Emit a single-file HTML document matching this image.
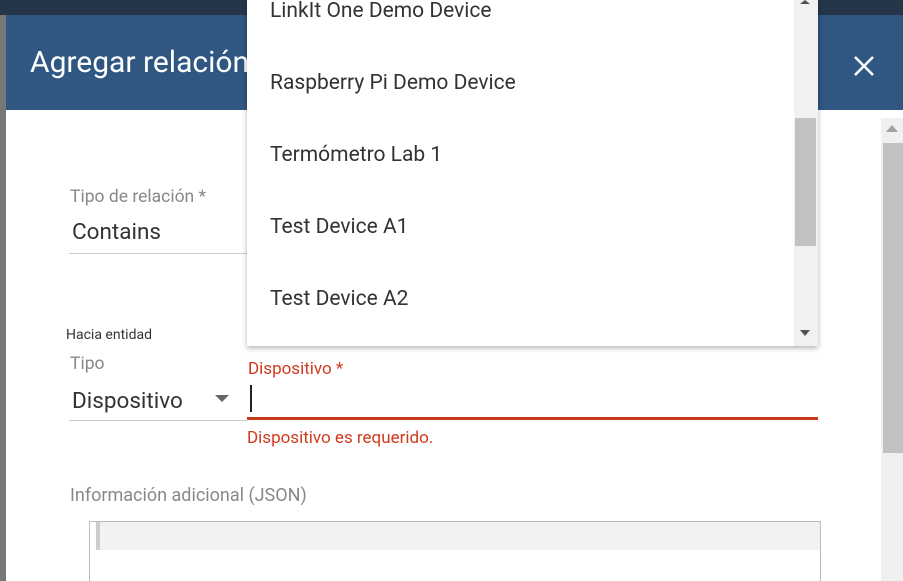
<!DOCTYPE html>
<html><head><meta charset="utf-8"><style>
*{margin:0;padding:0;box-sizing:border-box}
html,body{width:903px;height:581px;overflow:hidden}
body{position:relative;background:#777;font-family:"Roboto","Liberation Sans",sans-serif}
.top{position:absolute;left:0;top:0;width:903px;height:15px;background:#25364a}
.dlg{position:absolute;left:6px;top:15px;width:897px;height:566px;background:#fff;overflow:hidden}
.hdr{position:absolute;left:0;top:0;width:897px;height:95px;background:#2f5782}
.ttl{position:absolute;left:24px;top:30px;color:#fff;font-size:30px}
.abs{position:absolute}
.lbl{color:#888;font-size:17.5px}
.val{color:#333;font-size:22.5px}
.drop{position:absolute;left:247px;top:0;width:571px;height:346px;background:#fff;box-shadow:0 2px 5px rgba(0,0,0,.3)}
.it{position:absolute;left:23px;font-size:21px;color:#333}
</style></head><body>
<div class="top"></div>
<div class="dlg">
 <div class="hdr"><div class="ttl">Agregar relación</div>
  <svg class="abs" style="left:846px;top:39px" width="24" height="24"><path d="M3 3L21 21M21 3L3 21" stroke="#fff" stroke-width="2.6"/></svg>
 </div>
 <div class="abs lbl" style="left:64px;top:172px">Tipo de relación *</div>
 <div class="abs val" style="left:66px;top:204px">Contains</div>
 <div class="abs" style="left:63px;top:238px;width:190px;height:1px;background:#ccc"></div>
 <div class="abs" style="left:60px;top:312px;font-size:14px;color:#333">Hacia entidad</div>
 <div class="abs lbl" style="left:64px;top:339px">Tipo</div>
 <div class="abs val" style="left:66px;top:373px">Dispositivo</div>
 <svg class="abs" style="left:209px;top:380px" width="14" height="8"><path d="M0 0H14L7 7Z" fill="#666"/></svg>
 <div class="abs" style="left:63px;top:405px;width:178px;height:1px;background:#ccc"></div>
 <div class="abs" style="left:242px;top:344px;color:#d03a1c;font-size:17px">Dispositivo *</div>
 <div class="abs" style="left:244px;top:370px;width:2px;height:27px;background:#222"></div>
 <div class="abs" style="left:241px;top:402px;width:571px;height:3px;background:#c9371a"></div>
 <div class="abs" style="left:241px;top:413px;color:#d03a1c;font-size:17px">Dispositivo es requerido.</div>
 <div class="abs lbl" style="left:64px;top:470px;font-size:18px">Información adicional (JSON)</div>
 <div class="abs" style="left:83px;top:506px;width:732px;height:70px;border:1px solid #bbb;border-bottom:none"><div style="height:28px;background:#f2f2f2;border-left:4px solid #ccc;margin-left:6px"></div></div>
 <div class="abs" style="left:875px;top:103px;width:22px;height:463px;background:#f0f0f0"></div>
 <svg class="abs" style="left:880px;top:110px" width="12" height="7"><path d="M0 7H12L6 0Z" fill="#a0a0a0"/></svg>
 <div class="abs" style="left:877px;top:128px;width:20px;height:310px;background:#c1c1c1"></div>
</div>
<div class="drop">
 <div class="it" style="top:-1px">LinkIt One Demo Device</div>
 <div class="it" style="top:71px">Raspberry Pi Demo Device</div>
 <div class="it" style="top:143px">Termómetro Lab 1</div>
 <div class="it" style="top:215px">Test Device A1</div>
 <div class="it" style="top:287px">Test Device A2</div>
 <div class="abs" style="left:547px;top:0;width:24px;height:346px;background:#f1f1f1"></div>
 <div class="abs" style="left:548px;top:118px;width:21px;height:128px;background:#c1c1c1"></div>
 <svg class="abs" style="left:553px;top:0" width="10" height="4"><path d="M0 4H10L5 0Z" fill="#505050"/></svg>
 <svg class="abs" style="left:553px;top:330px" width="10" height="6"><path d="M0 0H10L5 6Z" fill="#505050"/></svg>
</div>
</body></html>
